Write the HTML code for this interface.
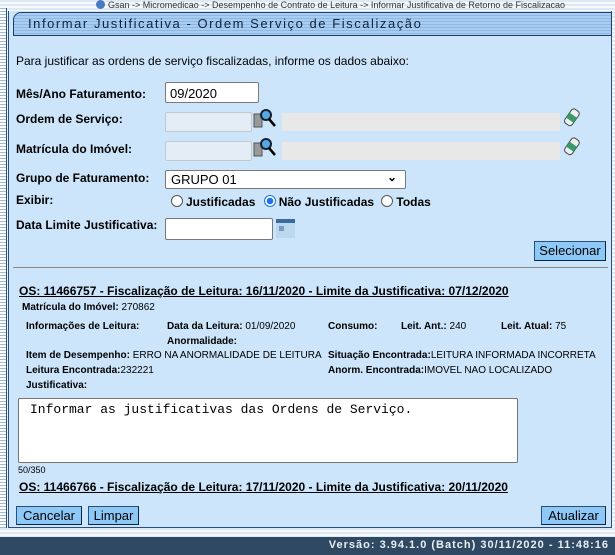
<!DOCTYPE html>
<html><head><meta charset="utf-8"><style>
*{margin:0;padding:0;box-sizing:border-box}
body{width:615px;height:555px;overflow:hidden;background:#eef4fb;font-family:"Liberation Sans",Arial,sans-serif;position:relative;color:#000}
.a{position:absolute;white-space:nowrap}
.stripe{background:repeating-linear-gradient(180deg,#dfe9f5 0 2px,#f7fafd 2px 4px)}
.lbl{font-size:12px}
.sm{font-size:10px}
.b{font-weight:bold}
.inp{position:absolute;background:#fff;border:1px solid #7a7a7a;border-radius:2px}
.dis{position:absolute;background:#e4edf6;border:1px solid #c0c8d0;border-radius:2px}
.dis2{position:absolute;background:#e8e8e8}
.btn{position:absolute;background:#8ec8f7;border:1px solid #2a4f7a;border-right-color:#0c2540;border-bottom-color:#0c2540;font-size:13px;text-align:center;line-height:17px}
.os{font-size:12px;font-weight:bold;text-decoration:underline}
.radio{display:inline-block;width:12px;height:12px;border:1px solid #555;border-radius:50%;background:#fff;vertical-align:-1px;margin-right:3px}
.radio.on{border-color:#1a73e8;background:radial-gradient(circle,#1a73e8 0 3px,#fff 3.5px)}
</style></head><body>
<div class="a stripe" style="left:0;top:0;width:615px;height:537px"></div>
<div class="a" style="left:0;top:8px;width:7px;height:520px;background:repeating-linear-gradient(180deg,#9db8d8 0 1px,#fff 1px 3px);border-right:1px solid #2a4f7a"></div>
<div class="a" style="left:96px;top:0;font-size:9px;color:#333;line-height:10px"><span style="display:inline-block;width:9px;height:9px;border-radius:50%;background:#4a79c4;vertical-align:-1px;margin-right:3px"></span>Gsan -&gt; Micromedicao -&gt; Desempenho de Contrato de Leitura -&gt; Informar Justificativa de Retorno de Fiscalizacao</div>
<div class="a" style="left:8px;top:11px;width:604px;height:517px;background:#cce5fb;border:1px solid #2a4f7a;border-top:none"></div>
<div class="a" style="left:13px;top:12px;width:599px;height:24px;border:1px solid #1f3f66;border-radius:8px 0 0 0;background:repeating-linear-gradient(180deg,#a9cdf0 0 2px,#8db8e6 2px 3px)"></div>
<div class="a" style="left:28px;top:16px;font-size:13px;letter-spacing:1.55px;color:#10243c">Informar Justificativa - Ordem Serviço de Fiscalização</div>
<div class="a lbl" style="left:16px;top:54px">Para justificar as ordens de serviço fiscalizadas, informe os dados abaixo:</div>
<div class="a lbl b" style="left:16px;top:87px">Mês/Ano Faturamento:</div>
<div class="inp" style="left:165px;top:82px;width:94px;height:21px"></div>
<div class="a" style="left:170px;top:86px;font-size:13px">09/2020</div>
<div class="a lbl b" style="left:16px;top:112px">Ordem de Serviço:</div>
<div class="dis" style="left:165px;top:112px;width:87px;height:20px"></div>
<svg class="a" style="left:253px;top:108px" width="26" height="22"><rect x="1" y="6" width="8" height="13" fill="#999" stroke="#555"/><circle cx="13" cy="7" r="5" fill="#5aa7e0" stroke="#123" stroke-width="2"/><line x1="16" y1="11" x2="22" y2="18" stroke="#000" stroke-width="2.5"/></svg>
<div class="dis2" style="left:282px;top:113px;width:278px;height:18px"></div>
<svg class="a" style="left:563px;top:107px" width="18" height="22"><g transform="rotate(35 9 11)"><rect x="4" y="2" width="9" height="17" rx="3" fill="#eee" stroke="#444"/><rect x="4" y="8" width="9" height="6" fill="#3a9a6a"/></g></svg>
<div class="a lbl b" style="left:16px;top:142px">Matrícula do Imóvel:</div>
<div class="dis" style="left:165px;top:141px;width:87px;height:20px"></div>
<svg class="a" style="left:253px;top:137px" width="26" height="22"><rect x="1" y="6" width="8" height="13" fill="#999" stroke="#555"/><circle cx="13" cy="7" r="5" fill="#5aa7e0" stroke="#123" stroke-width="2"/><line x1="16" y1="11" x2="22" y2="18" stroke="#000" stroke-width="2.5"/></svg>
<div class="dis2" style="left:282px;top:142px;width:278px;height:18px"></div>
<svg class="a" style="left:563px;top:136px" width="18" height="22"><g transform="rotate(35 9 11)"><rect x="4" y="2" width="9" height="17" rx="3" fill="#eee" stroke="#444"/><rect x="4" y="8" width="9" height="6" fill="#3a9a6a"/></g></svg>
<div class="a lbl b" style="left:16px;top:171px">Grupo de Faturamento:</div>
<div class="inp" style="left:165px;top:170px;width:241px;height:19px"></div>
<div class="a" style="left:171px;top:172px;font-size:13px">GRUPO 01</div>
<div class="a" style="left:387px;top:170px;font-size:12px;font-weight:bold">&#8964;</div>
<div class="a lbl b" style="left:16px;top:193px">Exibir:</div>
<div class="a lbl b" style="left:171px;top:195px"><span class="radio"></span>Justificadas <span class="radio on" style="margin-left:5px"></span>Não Justificadas <span class="radio" style="margin-left:4px"></span>Todas</div>
<div class="a lbl b" style="left:16px;top:218px">Data Limite Justificativa:</div>
<div class="inp" style="left:165px;top:218px;width:108px;height:22px"></div>
<svg class="a" style="left:276px;top:219px" width="20" height="20"><rect x="0" y="0" width="19" height="19" fill="#bcd8f0"/><rect x="0" y="0" width="19" height="4" fill="#3a6aa0"/><rect x="3" y="7" width="5" height="5" fill="#7a9ac0"/></svg>
<div class="btn" style="left:534px;top:241px;width:72px;height:20px">Selecionar</div>
<div class="a" style="left:13px;top:267px;width:595px;height:1px;background:#888"></div>
<div class="a os" style="left:19px;top:284px">OS: 11466757 - Fiscalização de Leitura: 16/11/2020 - Limite da Justificativa: 07/12/2020</div>
<div class="a sm" style="left:22px;top:302px"><b>Matrícula do Imóvel:</b> 270862</div>
<div class="a sm b" style="left:26px;top:321px">Informações de Leitura:</div>
<div class="a sm" style="left:167px;top:321px"><b>Data da Leitura:</b> 01/09/2020</div>
<div class="a sm b" style="left:328px;top:321px">Consumo:</div>
<div class="a sm" style="left:401px;top:321px"><b>Leit. Ant.:</b> 240</div>
<div class="a sm" style="left:501px;top:321px"><b>Leit. Atual:</b> 75</div>
<div class="a sm b" style="left:167px;top:336px">Anormalidade:</div>
<div class="a sm" style="left:26px;top:350px"><b>Item de Desempenho:</b> ERRO NA ANORMALIDADE DE LEITURA</div>
<div class="a sm" style="left:328px;top:350px"><b>Situação Encontrada:</b>LEITURA INFORMADA INCORRETA</div>
<div class="a sm" style="left:26px;top:365px"><b>Leitura Encontrada:</b>232221</div>
<div class="a sm" style="left:328px;top:365px"><b>Anorm. Encontrada:</b>IMOVEL NAO LOCALIZADO</div>
<div class="a sm b" style="left:26px;top:380px">Justificativa:</div>
<div class="inp" style="left:18px;top:398px;width:500px;height:65px;border-color:#767676"></div>
<div class="a" style="left:30px;top:402px;font-family:'Liberation Mono',monospace;font-size:13px">Informar as justificativas das Ordens de Serviço.</div>
<div class="a sm" style="left:18px;top:465px;font-size:9px">50/350</div>
<div class="a os" style="left:19px;top:480px">OS: 11466766 - Fiscalização de Leitura: 17/11/2020 - Limite da Justificativa: 20/11/2020</div>
<div class="btn" style="left:16px;top:506px;width:66px;height:19px">Cancelar</div>
<div class="btn" style="left:88px;top:506px;width:51px;height:19px">Limpar</div>
<div class="btn" style="left:541px;top:506px;width:65px;height:19px">Atualizar</div>
<div class="a" style="left:0;top:537px;width:615px;height:18px;background:#304962"></div>
<div class="a" style="right:6px;top:539px;font-size:11px;font-weight:bold;color:#e8eef4;letter-spacing:1px">Versão: 3.94.1.0 (Batch) 30/11/2020 - 11:48:16</div>
</body></html>
